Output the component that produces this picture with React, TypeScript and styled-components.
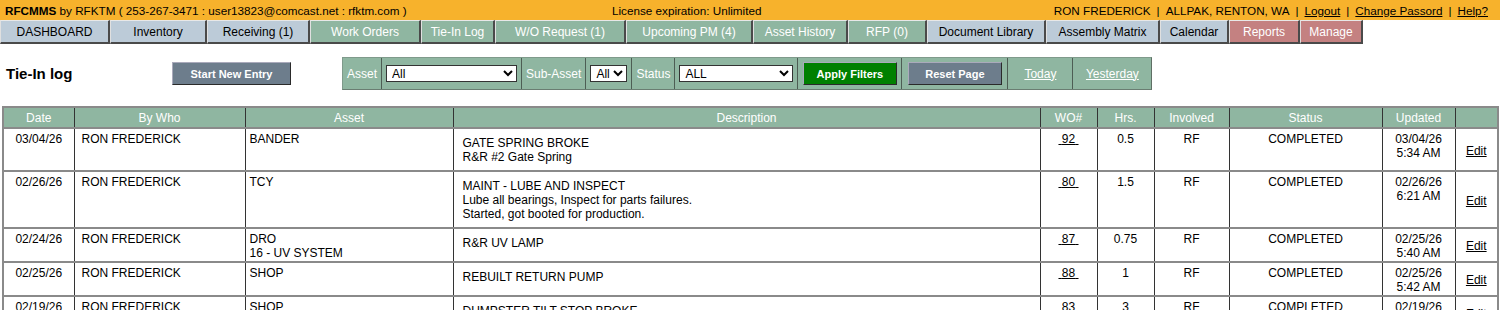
import React from "react"
import styled, { createGlobalStyle } from "styled-components"

const GlobalStyle = createGlobalStyle`
  body {
    margin: 0;
    background: #fff;
    font-family: "Liberation Sans", Arial, sans-serif;
    font-size: 12px;
    color: #000;
  }
`

const TopBar = styled.div`
  display: grid;
  grid-template-columns: 607px auto 1fr;
  align-items: center;
  height: 20px;
  background: #f7b22c;
  padding-left: 5px;
  font-size: 11.7px;
`

const Brand = styled.div`
  white-space: nowrap;
  b {
    font-weight: bold;
  }
`

const License = styled.div`
  white-space: nowrap;
`

const UserInfo = styled.div`
  text-align: right;
  padding-right: 12px;
  white-space: nowrap;
  a {
    color: #000;
    text-decoration: underline;
  }
`

const Sep = styled.span`
  margin: 0 6px;
`

const NavRow = styled.nav`
  display: flex;
  height: 24px;
`

const tabColors = {
  blue: { bg: "#bccbd8", fg: "#000" },
  green: { bg: "#8fb6a1", fg: "#fff" },
  red: { bg: "#c48181", fg: "#fff" },
}

type Tone = keyof typeof tabColors

const Tab = styled.a<{ $tone: Tone; $w: number }>`
  box-sizing: border-box;
  width: ${(p) => p.$w}px;
  display: flex;
  align-items: center;
  justify-content: center;
  background: ${(p) => tabColors[p.$tone].bg};
  color: ${(p) => tabColors[p.$tone].fg};
  border-top: 1px solid #e8e8e8;
  border-left: 1px solid #e0e0e0;
  border-right: 2px solid #4a4a4a;
  border-bottom: 2px solid #4a4a4a;
  font-size: 12px;
  text-decoration: none;
  white-space: nowrap;
`

const Toolbar = styled.div`
  display: grid;
  grid-template-columns: 166px 170px auto;
  align-items: center;
  padding-left: 6px;
  margin-top: 13px;
`

const Title = styled.h1`
  margin: 0;
  font-size: 15px;
  font-weight: bold;
`

const Button = styled.button<{ $variant: "slate" | "green" }>`
  box-sizing: border-box;
  height: 23px;
  width: 94px;
  background: ${(p) => (p.$variant === "green" ? "#008000" : "#6d7d8c")};
  color: #fff;
  font-family: "Liberation Sans", Arial, sans-serif;
  font-size: 11px;
  font-weight: bold;
  border: 1px solid #2a2a2a;
  border-top-color: #aab;
  border-left-color: #aab;
  padding: 0;
`

const StartButton = styled(Button)`
  width: 119px;
`

const FilterBox = styled.div`
  display: flex;
  height: 33px;
  box-sizing: border-box;
  background: #8fb6a1;
  border: 1px solid #7f9a8b;
  border-bottom-color: #6a7d72;
  border-right-color: #5f6f65;
  justify-self: start;
`

const FilterCell = styled.div<{ $w?: number }>`
  display: flex;
  align-items: center;
  justify-content: center;
  padding: 0 4px;
  ${(p) => (p.$w ? `width: ${p.$w}px; box-sizing: border-box;` : "")}
  border-left: 1px solid #4d5d54;
  &:first-child {
    border-left: none;
  }
  color: #fff;
  font-size: 12px;
  white-space: nowrap;
`

const FilterLink = styled.a`
  color: #fff;
  text-decoration: underline;
`

const Select = styled.select<{ $w: number }>`
  width: ${(p) => p.$w}px;
  height: 17px;
  font-family: "Liberation Sans", Arial, sans-serif;
  font-size: 12px;
  border: 1px solid #333;
  border-radius: 0;
  background: #fff;
  padding: 0 0 0 1px;
`

const Table = styled.table`
  margin: 16px 2px 0;
  width: 1495px;
  border-collapse: collapse;
  table-layout: fixed;
  border: 2px solid #8a8a8a;
`

const Th = styled.th`
  background: #8fb6a1;
  color: #fff;
  font-weight: normal;
  font-size: 12px;
  height: 19px;
  padding: 0 4px;
  border-left: 1px solid #333;
  border-top: 2px solid #8a8a8a;
  text-align: center;
`

const Td = styled.td<{ $align?: "left" | "center"; $pad?: string }>`
  vertical-align: top;
  text-align: ${(p) => p.$align ?? "left"};
  padding: ${(p) => p.$pad ?? "3px 4px 1px"};
  border-left: 1px solid #333;
  border-top: 2px solid #8a8a8a;
  font-size: 12px;
  line-height: 14px;
`

const DescTd = styled(Td)`
  padding: 7px 9px 6px;
`

const EditTd = styled(Td)`
  vertical-align: middle;
  text-align: center;
`

const UnderLink = styled.a`
  color: #000;
  text-decoration: underline;
`

const tabs: { label: string; tone: Tone; w: number }[] = [
  { label: "DASHBOARD", tone: "blue", w: 110 },
  { label: "Inventory", tone: "blue", w: 97 },
  { label: "Receiving (1)", tone: "blue", w: 103 },
  { label: "Work Orders", tone: "green", w: 111 },
  { label: "Tie-In Log", tone: "green", w: 74 },
  { label: "W/O Request (1)", tone: "green", w: 131 },
  { label: "Upcoming PM (4)", tone: "green", w: 127 },
  { label: "Asset History", tone: "green", w: 95 },
  { label: "RFP (0)", tone: "green", w: 79 },
  { label: "Document Library", tone: "blue", w: 119 },
  { label: "Assembly Matrix", tone: "blue", w: 114 },
  { label: "Calendar", tone: "blue", w: 69 },
  { label: "Reports", tone: "red", w: 71 },
  { label: "Manage", tone: "red", w: 63 },
]

const columns = [
  { name: "Date", w: 71 },
  { name: "By Who", w: 171 },
  { name: "Asset", w: 208 },
  { name: "Description", w: 587 },
  { name: "WO#", w: 57 },
  { name: "Hrs.", w: 57 },
  { name: "Involved", w: 75 },
  { name: "Status", w: 153 },
  { name: "Updated", w: 73 },
  { name: "", w: 43 },
]

const entries = [
  {
    date: "03/04/26",
    asset: ["BANDER"],
    desc: ["GATE SPRING BROKE", "R&R #2 Gate Spring"],
    wo: "92",
    hrs: "0.5",
    updated: ["03/04/26", "5:34 AM"],
  },
  {
    date: "02/26/26",
    asset: ["TCY"],
    desc: [
      "MAINT - LUBE AND INSPECT",
      "Lube all bearings, Inspect for parts failures.",
      "Started, got booted for production.",
    ],
    wo: "80",
    hrs: "1.5",
    updated: ["02/26/26", "6:21 AM"],
  },
  {
    date: "02/24/26",
    asset: ["DRO", "16 - UV SYSTEM"],
    desc: ["R&R UV LAMP"],
    wo: "87",
    hrs: "0.75",
    updated: ["02/25/26", "5:40 AM"],
  },
  {
    date: "02/25/26",
    asset: ["SHOP"],
    desc: ["REBUILT RETURN PUMP"],
    wo: "88",
    hrs: "1",
    updated: ["02/25/26", "5:42 AM"],
  },
  {
    date: "02/19/26",
    asset: ["SHOP"],
    desc: ["DUMPSTER TILT STOP BROKE"],
    wo: "83",
    hrs: "3",
    updated: ["02/19/26", "5:51 AM"],
  },
]

const Lines = ({ lines }: { lines: string[] }) => (
  <>
    {lines.map((l, i) => (
      <div key={i}>{l}</div>
    ))}
  </>
)

export default function App() {
  return (
    <>
      <GlobalStyle />
      <TopBar>
        <Brand>
          <b>RFCMMS</b> by RFKTM ( 253-267-3471 : user13823@comcast.net : rfktm.com )
        </Brand>
        <License>License expiration: Unlimited</License>
        <UserInfo>
          RON FREDERICK<Sep>|</Sep>ALLPAK, RENTON, WA<Sep>|</Sep>
          <a href="#">Logout</a>
          <Sep>|</Sep>
          <a href="#">Change Passord</a>
          <Sep>|</Sep>
          <a href="#">Help?</a>
        </UserInfo>
      </TopBar>

      <NavRow>
        {tabs.map((t) => (
          <Tab key={t.label} href="#" $tone={t.tone} $w={t.w}>
            {t.label}
          </Tab>
        ))}
      </NavRow>

      <Toolbar>
        <Title>Tie-In log</Title>
        <div>
          <StartButton $variant="slate">Start New Entry</StartButton>
        </div>
        <FilterBox>
          <FilterCell>Asset</FilterCell>
          <FilterCell>
            <Select $w={131} defaultValue="All">
              <option>All</option>
            </Select>
          </FilterCell>
          <FilterCell>Sub-Asset</FilterCell>
          <FilterCell>
            <Select $w={37} defaultValue="All">
              <option>All</option>
            </Select>
          </FilterCell>
          <FilterCell>Status</FilterCell>
          <FilterCell>
            <Select $w={114} defaultValue="ALL">
              <option>ALL</option>
            </Select>
          </FilterCell>
          <FilterCell $w={104}>
            <Button $variant="green">Apply Filters</Button>
          </FilterCell>
          <FilterCell $w={106}>
            <Button $variant="slate">Reset Page</Button>
          </FilterCell>
          <FilterCell $w={65}>
            <FilterLink href="#">Today</FilterLink>
          </FilterCell>
          <FilterCell $w={79}>
            <FilterLink href="#">Yesterday</FilterLink>
          </FilterCell>
        </FilterBox>
      </Toolbar>

      <Table>
        <colgroup>
          {columns.map((c, i) => (
            <col key={i} width={c.w} />
          ))}
        </colgroup>
        <thead>
          <tr>
            {columns.map((c, i) => (
              <Th key={i}>{c.name}</Th>
            ))}
          </tr>
        </thead>
        <tbody>
          {entries.map((e, i) => (
            <tr key={i}>
              <Td $align="center">{e.date}</Td>
              <Td $pad="3px 7px 1px">RON FREDERICK</Td>
              <Td>
                <Lines lines={e.asset} />
              </Td>
              <DescTd>
                <Lines lines={e.desc} />
              </DescTd>
              <Td $align="center">
                <UnderLink href="#">&nbsp;{e.wo}&nbsp;</UnderLink>
              </Td>
              <Td $align="center">{e.hrs}</Td>
              <Td $align="center">RF</Td>
              <Td $align="center">COMPLETED</Td>
              <Td $align="center">
                <Lines lines={e.updated} />
              </Td>
              <EditTd>
                <UnderLink href="#">Edit</UnderLink>
              </EditTd>
            </tr>
          ))}
        </tbody>
      </Table>
    </>
  )
}
